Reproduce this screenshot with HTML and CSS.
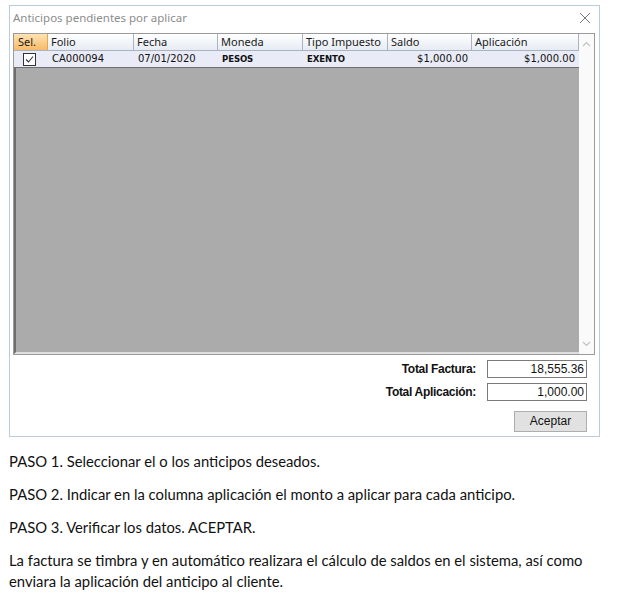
FILE: index.html
```html
<!DOCTYPE html>
<html lang="es">
<head>
    <meta charset="UTF-8">
    <meta name="viewport" content="width=device-width, initial-scale=1.0">
    <title>Anticipos pendientes por aplicar</title>
    <link rel="stylesheet" href="styles.css">
</head>
<body>
    <div class="dialog">
        <div class="title-bar">
            <span class="title">Anticipos pendientes por aplicar</span>
            <svg class="close" width="12" height="12" viewBox="0 0 12 12">
                <path d="M1 1 L11 11 M11 1 L1 11" stroke="#7a7a7a" stroke-width="1" fill="none"/>
            </svg>
        </div>

        <div class="grid">
            <div class="table">
                <div class="header-row">
                    <div class="head sel-head">Sel.</div>
                    <div class="head">Folio</div>
                    <div class="head">Fecha</div>
                    <div class="head">Moneda</div>
                    <div class="head">Tipo Impuesto</div>
                    <div class="head">Saldo</div>
                    <div class="head">Aplicación</div>
                </div>
                <div class="data-row">
                    <div class="cell check-cell">
                        <svg width="13" height="13" viewBox="0 0 13 13">
                            <rect x="0.5" y="0.5" width="12" height="12" fill="#fff" stroke="#333"/>
                            <path d="M3 6.5 L5.5 9 L10 3.5" stroke="#333" stroke-width="1.1" fill="none"/>
                        </svg>
                    </div>
                    <div class="cell">CA000094</div>
                    <div class="cell">07/01/2020</div>
                    <div class="cell narrow">PESOS</div>
                    <div class="cell narrow">EXENTO</div>
                    <div class="cell num">$1,000.00</div>
                    <div class="cell num">$1,000.00</div>
                </div>
                <div class="empty-area"></div>
            </div>
            <div class="scrollbar">
                <svg width="9" height="6" viewBox="0 0 9 6">
                    <path d="M1 5 L4.5 1.5 L8 5" stroke="#c2c2c2" stroke-width="1.2" fill="none"/>
                </svg>
                <svg width="9" height="6" viewBox="0 0 9 6">
                    <path d="M1 1 L4.5 4.5 L8 1" stroke="#c2c2c2" stroke-width="1.2" fill="none"/>
                </svg>
            </div>
        </div>

        <div class="totals">
            <div class="total-row">
                <span class="total-label">Total Factura:</span>
                <span class="total-box">18,555.36</span>
            </div>
            <div class="total-row">
                <span class="total-label">Total Aplicación:</span>
                <span class="total-box">1,000.00</span>
            </div>
            <div class="button-row">
                <button class="accept-button">Aceptar</button>
            </div>
        </div>
    </div>

    <div class="steps">
        <p>PASO 1. Seleccionar el o los anticipos deseados.</p>
        <p>PASO 2. Indicar en la columna aplicación el monto a aplicar para cada anticipo.</p>
        <p>PASO 3. Verificar los datos. ACEPTAR.</p>
        <p>La factura se timbra y en automático realizara el cálculo de saldos en el sistema, así como enviara la aplicación del anticipo al cliente.</p>
    </div>
</body>
</html>
```

FILE: styles.css
```css
body{
    margin: 0;
    padding: 5px 0 0 9px;
    background-color: white;
    font-family: "Noto Sans", sans-serif;
}
.dialog{
    width: 589px;
    height: 430px;
    border: 1px solid #bccbdd;
    display: flex;
    flex-direction: column;
}
.title-bar{
    height: 27px;
    display: flex;
    align-items: center;
    justify-content: space-between;
    padding-left: 3px;
    padding-right: 8px;
}
.title{
    font-size: 11.5px;
    color: #8c8c8c;
    margin-top: -5px;
}
.close{
    margin-top: -4px;
}
.grid{
    margin-left: 3px;
    width: 580px;
    height: 320px;
    border: 1px solid #9a9a9a;
    display: flex;
}
.table{
    width: 565px;
    display: flex;
    flex-direction: column;
}
.header-row{
    height: 16px;
    display: grid;
    grid-template-columns: 34px 86px 84px 85px 85px 84px 107px;
    background: linear-gradient(#ffffff, #e6ebf3);
    border-bottom: 1px solid #a9b3c2;
}
.head{
    font-size: 11px;
    line-height: 16px;
    color: #1a1a1a;
    padding-left: 3px;
    border-right: 1px solid #a9b3c2;
}
.sel-head{
    background: linear-gradient(#fde3b5, #f8bb66);
    padding-left: 4px;
    border-right: 1px solid #e9a54c;
}
.data-row{
    height: 16px;
    display: grid;
    grid-template-columns: 34px 86px 84px 85px 85px 84px 107px;
    background-color: #e9ebf6;
    border-bottom: 1px solid #6f6f6f;
}
.cell{
    font-family: "DejaVu Sans", sans-serif;
    font-size: 10px;
    line-height: 16px;
    color: #111;
    padding-left: 4px;
    white-space: nowrap;
}
.narrow{
    font-family: "DejaVu Sans Condensed", "DejaVu Sans", sans-serif;
    font-weight: bold;
    font-size: 9.5px;
    letter-spacing: -0.1px;
}
.num{
    text-align: right;
    padding-right: 4px;
}
.check-cell{
    display: flex;
    align-items: center;
    padding-left: 9px;
}
.empty-area{
    flex: 1;
    background-color: #ababab;
    border-left: 2px solid #6e6e6e;
    border-bottom: 2px solid #dedede;
}
.scrollbar{
    width: 15px;
    background-color: #fafafa;
    display: flex;
    flex-direction: column;
    justify-content: space-between;
    align-items: center;
    padding: 7px 0 7px 0;
}
.totals{
    display: flex;
    flex-direction: column;
    align-items: flex-end;
    padding-right: 12px;
    padding-top: 5px;
}
.total-row{
    display: flex;
    align-items: center;
    gap: 11px;
    margin-bottom: 5px;
}
.total-label{
    font-family: "Liberation Sans", Arial, sans-serif;
    font-weight: bold;
    font-size: 12px;
    color: #111;
    letter-spacing: -0.3px;
}
.total-box{
    width: 96px;
    height: 16px;
    border: 1px solid #7a7a7a;
    font-family: "Liberation Sans", Arial, sans-serif;
    font-size: 12px;
    line-height: 16px;
    text-align: right;
    padding-right: 2px;
    color: #111;
}
.button-row{
    padding-top: 2px;
}
.accept-button{
    width: 73px;
    height: 21px;
    background-color: #e1e1e1;
    border: 1px solid #adadad;
    font-family: "Liberation Sans", Arial, sans-serif;
    font-size: 12px;
    color: #111;
    padding: 0;
}
.steps{
    padding-top: 14px;
    font-family: Lato, sans-serif;
    font-size: 14.8px;
    color: #111;
}
.steps p{
    margin: 0 0 12px 0;
    line-height: 21px;
    width: 600px;
}
```
